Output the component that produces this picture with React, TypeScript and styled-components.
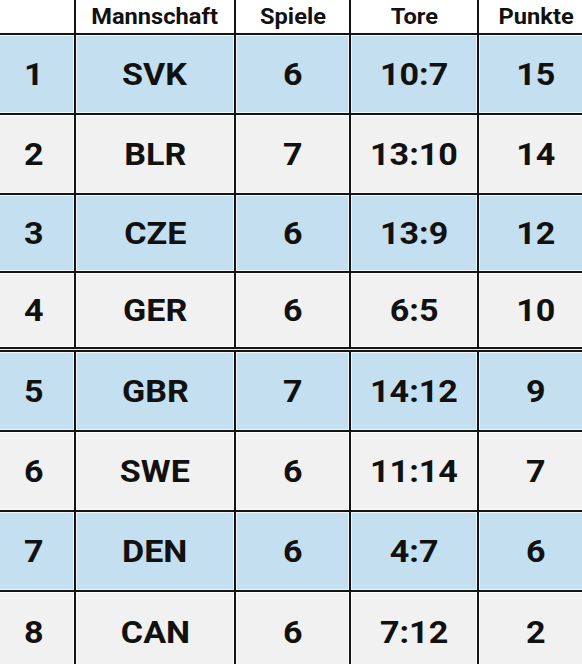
import React from "react";
import styled, { createGlobalStyle } from "styled-components";

const Global = createGlobalStyle`
  html, body { margin: 0; padding: 0; background: #ffffff; overflow: hidden; }
  body { font-family: Roboto, "Liberation Sans", Arial, sans-serif; }
`;

const Viewport = styled.div`
  width: 582px;
  height: 664px;
  overflow: hidden;
`;

const Table = styled.div`
  display: flex;
  flex-direction: column;
  width: 599px;
  margin-left: -6px;
  background: #141414;
  gap: 2px;
`;

const Row = styled.div<{ $h: number }>`
  display: grid;
  grid-template-columns: 80px 158px 113px 126px 114px;
  column-gap: 2px;
  height: ${(p) => p.$h}px;
`;

const Cell = styled.div<{ $bg: string; $head?: boolean }>`
  background: ${(p) => p.$bg};
  box-shadow: inset 0 0 0 1px ${(p) => (p.$head ? "#ffffff" : "rgba(255,255,255,0.75)")};
  display: flex;
  align-items: center;
  justify-content: center;
  color: #111111;
  font-weight: 700;
  font-size: ${(p) => (p.$head ? "21.5px" : "31px")};
  padding-top: ${(p) => (p.$head ? "0" : "1px")};
`;

const Text = styled.span`
  display: inline-block;
  transform: scaleX(1.1);
`;

const Sep = styled.div`
  height: 1px;
  background: #e8e8e8;
`;

const rows = [
  ["1", "SVK", "6", "10:7", "15"],
  ["2", "BLR", "7", "13:10", "14"],
  ["3", "CZE", "6", "13:9", "12"],
  ["4", "GER", "6", "6:5", "10"],
  ["5", "GBR", "7", "14:12", "9"],
  ["6", "SWE", "6", "11:14", "7"],
  ["7", "DEN", "6", "4:7", "6"],
  ["8", "CAN", "6", "7:12", "2"],
];

const heights = [78, 78, 76, 74, 78, 78, 78, 80];

export default function App() {
  return (
    <>
      <Global />
      <Viewport>
        <Table>
          <Row $h={33}>
            {["", "Mannschaft", "Spiele", "Tore", "Punkte"].map((t, i) => (
              <Cell key={i} $bg="#ffffff" $head>
                <Text>{t}</Text>
              </Cell>
            ))}
          </Row>
          {rows.map((r, i) => (
            <React.Fragment key={i}>
              <Row $h={heights[i]}>
                {r.map((t, j) => (
                  <Cell key={j} $bg={i % 2 === 0 ? "#c3dff0" : "#f1f1f1"}>
                    <Text>{t}</Text>
                  </Cell>
                ))}
              </Row>
              {i === 3 && <Sep />}
            </React.Fragment>
          ))}
        </Table>
      </Viewport>
    </>
  );
}
